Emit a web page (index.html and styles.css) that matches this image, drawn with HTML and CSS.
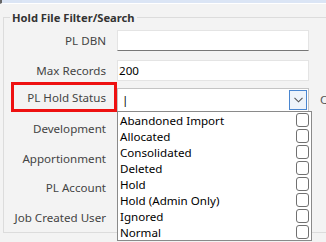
FILE: index.html
```html
<!DOCTYPE html>
<html lang="en">

<head>
    <meta charset="UTF-8">
    <title>Hold File Filter</title>
    <link rel="stylesheet" href="styles.css">
</head>

<body>
    <div class="topbar"></div>
    <fieldset class="filter">
        <legend>Hold File Filter/Search</legend>
        <div class="row">
            <div class="lbl">PL DBN</div>
            <div class="inp first"></div>
        </div>
        <div class="row">
            <div class="lbl">Max Records</div>
            <div class="inp">200</div>
        </div>
        <div class="row">
            <div class="lbl mark">PL Hold Status</div>
            <div class="sel">
                <span class="caret">|</span>
                <div class="btn">
                    <svg width="9" height="6" viewBox="0 0 9 6"><path d="M0.5 0.8 L4.5 4.8 L8.5 0.8" fill="none" stroke="#555" stroke-width="1.1"/></svg>
                </div>
                <div class="list">
                    <div class="opt">Abandoned Import<span class="box"></span></div>
                    <div class="opt">Allocated<span class="box"></span></div>
                    <div class="opt">Consolidated<span class="box"></span></div>
                    <div class="opt">Deleted<span class="box"></span></div>
                    <div class="opt">Hold<span class="box"></span></div>
                    <div class="opt">Hold (Admin Only)<span class="box"></span></div>
                    <div class="opt">Ignored<span class="box"></span></div>
                    <div class="opt">Normal<span class="box"></span></div>
                </div>
            </div>
            <div class="side">C</div>
        </div>
        <div class="row">
            <div class="lbl">Development</div>
        </div>
        <div class="row">
            <div class="lbl">Apportionment</div>
        </div>
        <div class="row">
            <div class="lbl">PL Account</div>
        </div>
        <div class="row">
            <div class="lbl">Job Created User</div>
        </div>
    </fieldset>
</body>

</html>
```

FILE: styles.css
```css
body {
    margin: 0px;
    background-color: #f3f3f3;
    overflow: hidden;
    height: 242px;
}

* {
    font-family: 'Noto Sans', 'Open Sans', Arial, sans-serif;
    font-size: 11.6px;
    box-sizing: border-box;
}

.topbar {
    height: 4px;
    background-color: #dbe5f5;
    border-bottom: 1px solid #ffffff;
    border-left: 2px solid #666;
}

.filter {
    margin: 6px 0px 0px 3px;
    padding: 1px 0px 0px 0px;
    border: 1px solid #dcdcdc;
    border-right: none;
    min-width: 0;
}

.filter legend {
    margin-left: 6px;
    padding: 0px 2px;
    font-size: 11.2px;
    font-weight: bold;
    color: #333;
}

.row {
    display: flex;
    align-items: center;
    height: 29.4px;
    white-space: nowrap;
}

.lbl {
    flex-shrink: 0;
    width: 106px;
    margin-left: 7px;
    padding-right: 11px;
    text-align: right;
    color: #444;
}

.mark {
    height: 30px;
    padding-top: 2px;
    line-height: 22px;
    border: 3px solid #ee1111;
    padding-right: 8px;
    margin-top: -4px;
}

.inp {
    flex-shrink: 0;
    width: 192px;
    height: 21px;
    background-color: #ffffff;
    border: 1px solid #e4e4e4;
    padding-left: 1px;
    line-height: 19px;
    color: #000;
}

.first {
    border-bottom-color: #777;
}

.sel {
    flex-shrink: 0;
    position: relative;
    width: 192px;
    height: 24px;
    background-color: #ffffff;
    border: 1px solid #c4c4c4;
    margin-top: 2px;
}

.caret {
    margin-left: 4px;
    line-height: 21px;
    color: #000;
}

.btn {
    position: absolute;
    right: 1px;
    top: 1px;
    width: 18px;
    height: 20px;
    border: 1px solid #4a86d0;
    background-color: #eef4fb;
    display: flex;
    align-items: center;
    justify-content: center;
}

.list {
    position: absolute;
    left: -1px;
    top: 22px;
    width: 195px;
    background-color: #ffffff;
    border: 1px solid #8a8a8a;
    z-index: 2;
}

.opt {
    display: flex;
    justify-content: space-between;
    align-items: center;
    height: 16px;
    padding: 0px 2px 0px 2px;
    color: #000;
}

.box {
    width: 13px;
    height: 14px;
    border: 1px solid #707070;
    border-radius: 3px;
    background-color: #ffffff;
}

.side {
    margin-left: 11px;
    color: #555;
}
```
